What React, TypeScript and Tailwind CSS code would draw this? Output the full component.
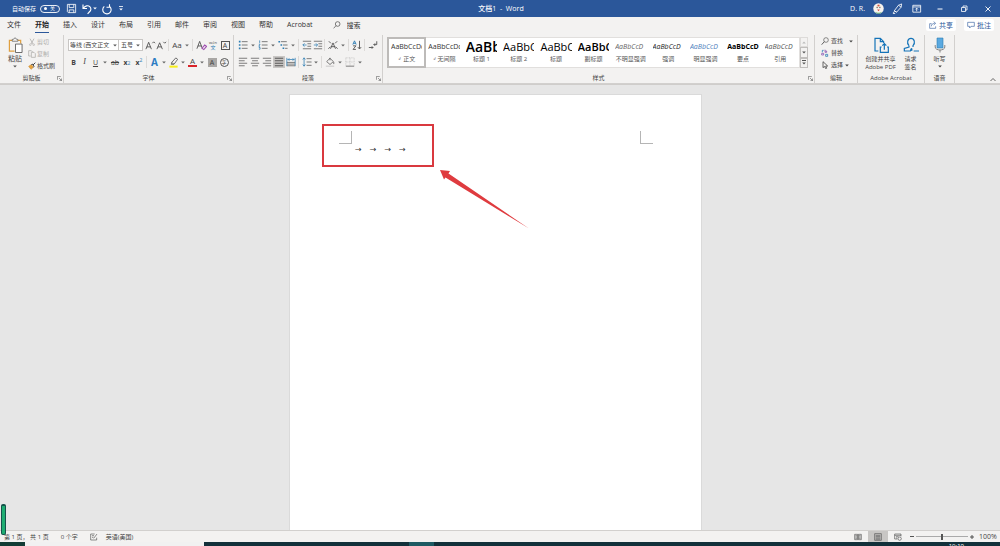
import type { ReactNode } from 'react';

const TABS = ['文件', '开始', '插入', '设计', '布局', '引用', '邮件', '审阅', '视图', '帮助', 'Acrobat'];

const STYLES = [
    { name: '正文', sample: 'AaBbCcDc', look: 'text-[7px] text-[#333]', mark: true, active: true },
    { name: '无间隔', sample: 'AaBbCcDc', look: 'text-[7px] text-[#333]', mark: true },
    { name: '标题 1', sample: 'AaBb', look: 'text-[14px] font-semibold text-black' },
    { name: '标题 2', sample: 'AaBbC', look: 'text-[11px] text-black' },
    { name: '标题', sample: 'AaBbC', look: 'text-[11px] text-black' },
    { name: '副标题', sample: 'AaBbC', look: 'text-[11px] font-semibold text-black' },
    { name: '不明显强调', sample: 'AaBbCcD', look: 'text-[7px] italic text-[#666]' },
    { name: '强调', sample: 'AaBbCcD', look: 'text-[7px] italic text-[#222]' },
    { name: '明显强调', sample: 'AaBbCcD', look: 'text-[7px] italic text-[#4f81bd]' },
    { name: '要点', sample: 'AaBbCcD', look: 'text-[7px] font-bold text-black' },
    { name: '引用', sample: 'AaBbCcD', look: 'text-[7px] italic text-[#555]' },
];

function Icon({ children, className = 'size-3' }: { children: ReactNode; className?: string }) {
    return (
        <svg viewBox="0 0 12 12" className={`shrink-0 ${className}`} fill="none" stroke="currentColor" strokeWidth="0.9" aria-hidden="true">
            {children}
        </svg>
    );
}

function Caret() {
    return (
        <svg viewBox="0 0 4 3" className="h-[3px] w-1 shrink-0" fill="currentColor" aria-hidden="true">
            <path d="M.2 .5h3.600L2 2.500z" />
        </svg>
    );
}

function Drop({ label }: { label: string }) {
    return (
        <button aria-label={label} className="flex h-4 w-2 items-center justify-center text-[#666]">
            <Caret />
        </button>
    );
}

function Tool({ label, children, className = 'w-3' }: { label: string; children: ReactNode; className?: string }) {
    return (
        <button aria-label={label} className={`flex h-4 shrink-0 items-center justify-center ${className}`}>
            {children}
        </button>
    );
}

function Sep() {
    return <span className="mx-px h-3 w-0.5 shrink-0 border-l border-[#dcdad8]" />;
}

function Group({ title, children, className = '', launcher = false }: { title: string; children: ReactNode; className?: string; launcher?: boolean }) {
    return (
        <section aria-label={title} className={`mt-0.5 flex flex-col border-r border-[#d2d0ce] ${className}`}>
            <div className="flex-1">{children}</div>
            <div className="flex h-2.5 items-center text-[6px]">
                <span className="w-1.5" />
                <span className="flex-1 text-center whitespace-nowrap">{title}</span>
                <span className="w-1.5">
                    {launcher && (
                        <Icon className="size-[5px] text-[#666]">
                            <path d="M1 9V1h8M5 5l6 6M11 6v5H6" strokeWidth="1.6" />
                        </Icon>
                    )}
                </span>
            </div>
        </section>
    );
}

function TitleBar() {
    return (
        <header className="flex h-[17px] items-center bg-[#2b579a] text-[6px] text-white">
            <div className="flex flex-1 items-center pl-3">
                <label className="flex items-center gap-1">
                    自动保存
                    <span className="relative flex h-2 w-5 items-center justify-end rounded-full border border-white/90 pr-1 text-[5px] leading-none">
                        <input type="checkbox" className="absolute left-[3px] size-[3px] appearance-none rounded-full bg-white" />
                        关
                    </span>
                </label>
                <button aria-label="保存" className="ml-1.5">
                    <Icon className="size-[11px]">
                        <path d="M1.500 1.500h9v9h-8l-1-1zM3.500 1.500v3.500h5V1.500M3.500 10.500V7.500h5v3" />
                    </Icon>
                </button>
                <button aria-label="撤消" className="ml-1 flex items-center">
                    <Icon>
                        <path d="M2 1.500v4h4M2.300 5.200C4 2.800 7 2 8.800 3.600c2 2 1 4-.5 5.400L6.600 10.800" strokeWidth="1.1" />
                    </Icon>
                    <Caret />
                </button>
                <button aria-label="恢复" className="ml-1">
                    <Icon>
                        <path d="M8.500 1.200v3h-3M8.300 3.200a4.200 4.200 0 1 1-5 .2" strokeWidth="1.1" />
                    </Icon>
                </button>
                <button aria-label="自定义快速访问工具栏" className="ml-1.5 flex flex-col items-center gap-px">
                    <span className="h-px w-1 bg-white/80" />
                    <Caret />
                </button>
            </div>
            <h1 className="text-[7px] font-medium">文档1 &nbsp;-&nbsp; Word</h1>
            <div className="flex flex-1 items-center justify-end pr-2.5">
                <span className="text-[7px]">D. R.</span>
                <svg viewBox="0 0 12 12" className="ml-2 size-[11px]" aria-hidden="true">
                    <circle cx="6" cy="6" r="5.700" fill="#f7f3ee" />
                    <path d="M3.500 4.500c0-4 5-4 5 0z" fill="#e9dccb" />
                    <circle cx="4.500" cy="5" r=".7" fill="#444" />
                    <circle cx="7.500" cy="5" r=".7" fill="#444" />
                    <path d="M5 2h2v1.500H5zM4.500 7h3l-1.500 2z" fill="#d9483b" />
                    <path d="M2 9.500c2 1.500 6 1.500 8 0-2 3-6 3-8 0z" fill="#4fa36c" />
                </svg>
                <button aria-label="即将推出的功能" className="ml-2">
                    <Icon className="size-[11px]">
                        <path d="M2.500 8.500 7 2.500 10.500 1 10 4.500 5 10zM7 2.500l3 2M2.500 8.500 5 10M1 10.500l2-1M3.500 11.500h-2.500" />
                    </Icon>
                </button>
                <button aria-label="功能区显示选项" className="ml-2">
                    <Icon className="size-[11px]">
                        <path d="M2 2.500h8.500v7.500H2zM2 4.300h8.500M6.200 9V5.800M4.800 7l1.400-1.400L7.600 7" />
                    </Icon>
                </button>
                <button aria-label="最小化" className="ml-3">
                    <Icon>
                        <path d="M3.500 6h5" strokeWidth="1" />
                    </Icon>
                </button>
                <button aria-label="向下还原" className="ml-3">
                    <Icon>
                        <path d="M3.500 4.500h4v4h-4zM5 4.500V3h4v4H7.500" strokeWidth="0.8" />
                    </Icon>
                </button>
                <button aria-label="关闭" className="ml-3">
                    <Icon className="-mr-1 size-3">
                        <path d="m3.500 3.500 5 5M8.500 3.500l-5 5" />
                    </Icon>
                </button>
            </div>
        </header>
    );
}

function TabBar() {
    return (
        <nav className="flex h-4 items-center text-[7px] text-[#333]">
            <div className="flex items-center gap-[14px] pl-[7px]">
                {TABS.map((tab) => (
                    <button
                        key={tab}
                        className={`h-[15px] border-b whitespace-nowrap ${tab === '开始' ? 'border-[#2b579a] font-bold text-[#222]' : 'border-transparent'}`}
                    >
                        {tab}
                    </button>
                ))}
            </div>
            <label className="ml-5 flex items-center gap-1.5">
                <Icon className="size-2">
                    <circle cx="7" cy="4.500" r="3.500" />
                    <path d="M4.500 7 1 11" />
                </Icon>
                <input aria-label="搜索" placeholder="搜索" className="w-16 bg-transparent outline-none placeholder:text-[#333]" />
            </label>
            <div className="ml-auto flex gap-2 pr-1.5 text-[#2b579a]">
                <button className="flex h-3 items-center gap-0.5 rounded-xs bg-white px-[3px]">
                    <Icon className="size-2">
                        <path d="M4 4H1v7h9V8M3.500 8c0-3 2-4.500 5-4.500M7 1l3 2.500L7 6" />
                    </Icon>
                    共享
                </button>
                <button className="flex h-3 items-center gap-0.5 rounded-xs bg-white px-[3px]">
                    <Icon className="size-2">
                        <path d="M1 2h10v6H6l-2 2.500V8H1z" />
                    </Icon>
                    批注
                </button>
            </div>
        </nav>
    );
}

function ClipboardGroup() {
    return (
        <Group title="剪贴板" className="w-16" launcher>
            <div className="flex pt-px pl-1.5">
                <button className="flex w-[18px] flex-col items-center pt-px text-[7px] leading-[8px]">
                    <svg viewBox="0 0 16 17" className="mb-0.5 h-4 w-[15px]" fill="none" aria-hidden="true">
                        <path d="M7 15H1.500V3.500h12V7" stroke="#e0a040" strokeWidth="1.300" />
                        <path d="M4.500 4.500v-2h1.300c.5-2 3-2 3.400 0h1.300v2z" fill="#f3f2f1" stroke="#666" strokeWidth=".8" />
                        <path d="M8 7.500h7v9H8z" fill="#fff" stroke="#555" strokeWidth=".9" />
                    </svg>
                    粘贴
                    <span className="mt-0.5 text-[#555]">
                        <Caret />
                    </span>
                </button>
                <div className="ml-1 flex flex-col text-[6px]">
                    <button disabled className="flex h-3 items-center gap-px text-[#b0aeac]">
                        <Icon className="size-2">
                            <path d="m3 1 4.500 8M9 1 4.500 9" strokeWidth="1.200" />
                            <circle cx="3.500" cy="10" r="1.300" />
                            <circle cx="8.500" cy="10" r="1.300" />
                        </Icon>
                        剪切
                    </button>
                    <button disabled className="flex h-3 items-center gap-px text-[#b0aeac]">
                        <Icon className="size-2">
                            <path d="M4 9H1V1h4l2 2M5 3.500h4l2 2V11H5z" strokeWidth="1.200" />
                        </Icon>
                        复制
                    </button>
                    <button className="flex h-3 items-center gap-px">
                        <Icon className="size-2">
                            <path d="M1 6.500 5 4l3 4-3.500 3z" fill="#e8a33d" stroke="#c98a2b" />
                            <path d="m5 4 1.500-1L9 6.500 8 8M7.500 4.500 11 1" strokeWidth="1.500" stroke="#444" />
                        </Icon>
                        格式刷
                    </button>
                </div>
            </div>
        </Group>
    );
}

function FontGroup() {
    return (
        <Group title="字体" className="w-[170px]" launcher>
            <div className="flex flex-col gap-px pt-0.5 pl-1 text-[8px]">
                <div className="flex h-4 items-center">
                    <div className="relative flex h-3 w-[51px] items-center border border-[#c8c6c4] bg-white">
                        <select aria-label="字体" className="w-full appearance-none overflow-hidden pl-px text-[6px] whitespace-nowrap outline-none">
                            <option>等线 (西文正文</option>
                        </select>
                        <span className="pointer-events-none absolute right-px text-[#555]">
                            <Caret />
                        </span>
                    </div>
                    <div className="relative mr-0.5 flex h-3 w-6 items-center border border-l-0 border-[#c8c6c4] bg-white">
                        <select aria-label="字号" className="w-full appearance-none pl-0.5 text-[6px] outline-none">
                            <option>五号</option>
                        </select>
                        <span className="pointer-events-none absolute right-0.5 text-[#555]">
                            <Caret />
                        </span>
                    </div>
                    <Tool label="增大字号" className="w-[11px]">
                        <Icon className="size-[11px]">
                            <path d="m1 10 3-7.500L7 10M2 7.500h4M8 3.500 9.500 2 11 3.500" />
                        </Icon>
                    </Tool>
                    <Tool label="减小字号" className="w-[11px]">
                        <Icon className="size-[11px]">
                            <path d="m1 10 3-7L7 10M2 7.500h4M8 2l1.500 1.500L11 2" />
                        </Icon>
                    </Tool>
                    <Sep />
                    <Tool label="更改大小写">Aa</Tool>
                    <Drop label="更改大小写选项" />
                    <Sep />
                    <Tool label="清除格式">
                        <Icon className="size-[11px]">
                            <path d="m1 9.500 3-8 3 8M2 6.500h4" />
                            <path d="m6.500 9 3-3.500L11.500 7l-3 3.500z" stroke="#a04fb0" strokeWidth="1.200" />
                        </Icon>
                    </Tool>
                    <Tool label="拼音指南">
                        <span className="flex flex-col items-center text-[4px] leading-[4px]">
                            wén<span className="text-[5px] leading-[5px] text-[#2b7cb3]">文</span>
                        </span>
                    </Tool>
                    <Tool label="字符边框">
                        <span className="flex size-[9px] items-center justify-center border border-[#555] text-[7px]">A</span>
                    </Tool>
                </div>
                <div className="flex h-4 items-center text-[7px]">
                    <Tool label="加粗" className="w-[11px]">
                        <b>B</b>
                    </Tool>
                    <Tool label="倾斜" className="w-[11px]">
                        <i className="font-[family-name:'Liberation_Serif'] text-[8px]">I</i>
                    </Tool>
                    <Tool label="下划线" className="w-[11px]">
                        <u>U</u>
                    </Tool>
                    <Drop label="下划线样式" />
                    <Tool label="删除线">
                        <s>ab</s>
                    </Tool>
                    <Tool label="下标">
                        <b>x</b>
                        <sub className="text-[5px] text-[#2b7cb3]">2</sub>
                    </Tool>
                    <Tool label="上标">
                        <b>x</b>
                        <sup className="text-[5px] text-[#2b7cb3]">2</sup>
                    </Tool>
                    <Sep />
                    <Tool label="文本效果" className="w-[11px]">
                        <b className="text-[10px] text-[#2b7cc3]">A</b>
                    </Tool>
                    <Drop label="文本效果选项" />
                    <Tool label="突出显示" className="w-[11px]">
                        <Icon className="size-[11px]">
                            <path d="m4 6 4.500-5L10.500 2.500 6.500 8zM4 6l-.5 2h2l1-.5" stroke="#555" />
                            <path d="M1.500 10.500h9" stroke="#f7ee1a" strokeWidth="2.200" />
                        </Icon>
                    </Tool>
                    <Drop label="突出显示颜色" />
                    <Tool label="字体颜色" className="w-[11px]">
                        <span className="w-[9px] border-b-2 border-[#d8232a] text-center text-[8px] leading-[8px]">A</span>
                    </Tool>
                    <Drop label="字体颜色选项" />
                    <Tool label="字符底纹">
                        <span className="flex size-[9px] items-center justify-center bg-[#a9a7a5]">A</span>
                    </Tool>
                    <Tool label="带圈字符">
                        <span className="flex size-[9px] items-center justify-center rounded-full border border-[#555] text-[5px]">字</span>
                    </Tool>
                </div>
            </div>
        </Group>
    );
}

function ParagraphGroup() {
    return (
        <Group title="段落" className="w-[149px]" launcher>
            <div className="flex flex-col gap-px pt-0.5 pl-[3px] text-[#555]">
                <div className="flex h-4 items-center">
                    <Tool label="项目符号">
                        <Icon className="size-2.5">
                            <path d="M4.500 2h7M4.500 6h7M4.500 10h7" />
                            <path d="M1 2h2M1 6h2M1 10h2" stroke="#2b7cb3" strokeWidth="2" />
                        </Icon>
                    </Tool>
                    <Drop label="项目符号库" />
                    <Tool label="编号">
                        <Icon className="size-2.5">
                            <path d="M4.500 2h7M4.500 6h7M4.500 10h7" />
                            <path d="M2 .5v3M1 5h1.500L1 7.500h1.500M1 9h1.500v2H1" stroke="#2b7cb3" />
                        </Icon>
                    </Tool>
                    <Drop label="编号库" />
                    <Tool label="多级列表">
                        <Icon className="size-2.5">
                            <path d="M3.500 2h7M6 6h5.500M8.500 10h3" />
                            <path d="M.5 2h2M3 6h2M5.500 10h2" stroke="#2b7cb3" strokeWidth="1.800" />
                        </Icon>
                    </Tool>
                    <Drop label="列表库" />
                    <Sep />
                    <Tool label="减少缩进量" className="w-[11px]">
                        <Icon className="size-2.5">
                            <path d="M1 1.500h10M6.500 4.500H11M6.500 7.500H11M1 10.500h10" />
                            <path d="M5.500 6H1M3 4 1 6l2 2" stroke="#2b7cb3" />
                        </Icon>
                    </Tool>
                    <Tool label="增加缩进量" className="w-[11px]">
                        <Icon className="size-2.5">
                            <path d="M1 1.500h10M6.500 4.500H11M6.500 7.500H11M1 10.500h10" />
                            <path d="M1 6h4.500M3.500 4l2 2-2 2" stroke="#2b7cb3" />
                        </Icon>
                    </Tool>
                    <Sep />
                    <Tool label="中文版式">
                        <Icon className="size-2.5">
                            <path d="m3 10.500 3-7 3 7M4 8h4M1 1.500l2.500 2.500M11 1.500 8.500 4M.5 10.500 3 8M11.500 10.500 9 8" strokeWidth="1.100" />
                        </Icon>
                    </Tool>
                    <Drop label="中文版式选项" />
                    <Sep />
                    <Tool label="排序">
                        <Icon className="size-2.5">
                            <path d="m1 5.500 2-4.500 2 4.500M1.700 4h2.600" stroke="#2b7cb3" strokeWidth="1.100" />
                            <path d="M1.300 7h3.400l-3.400 4.300h3.400M9 1v9.500M7 8.500l2 2.300 2-2.300" strokeWidth="1.100" />
                        </Icon>
                    </Tool>
                    <Sep />
                    <Tool label="显示编辑标记">
                        <Icon className="size-2.5">
                            <path d="M10.500 1.500v4H7M8.500 4 7 5.500 8.500 7M1 9h5M4.500 7.500 6 9l-1.500 1.500" strokeWidth="1.100" />
                        </Icon>
                    </Tool>
                </div>
                <div className="flex h-4 items-center">
                    <Tool label="左对齐">
                        <Icon className="size-2.5">
                            <path d="M1 1.500h10M1 4.500h7M1 7.500h10M1 10.500h7" />
                        </Icon>
                    </Tool>
                    <Tool label="居中">
                        <Icon className="size-2.5">
                            <path d="M1 1.500h10M2.500 4.500h7M1 7.500h10M2.500 10.500h7" />
                        </Icon>
                    </Tool>
                    <Tool label="右对齐">
                        <Icon className="size-2.5">
                            <path d="M1 1.500h10M4 4.500h7M1 7.500h10M4 10.500h7" />
                        </Icon>
                    </Tool>
                    <button aria-label="两端对齐" className="flex h-3 w-3 items-center justify-center bg-[#c8c6c4]">
                        <Icon className="size-2.5">
                            <path d="M1 1.500h10M1 4.500h10M1 7.500h10M1 10.500h10" stroke="#333" />
                        </Icon>
                    </button>
                    <Tool label="分散对齐">
                        <Icon className="size-2.5">
                            <path d="M1 6.500h10M1 8.500h10M1 10.500h10" />
                            <path d="M1 1v10M11 1v10M2 3h8M4 1.500 2.500 3 4 4.500M8 1.500 9.500 3 8 4.500" stroke="#2b7cb3" />
                        </Icon>
                    </Tool>
                    <Sep />
                    <Tool label="行距" className="w-[11px]">
                        <Icon className="size-2.5">
                            <path d="M5.500 2h6M5.500 6h6M5.500 10h6" />
                            <path d="M2.500 1v10M1 3l1.500-2L4 3M1 9l1.500 2L4 9" stroke="#2b7cb3" />
                        </Icon>
                    </Tool>
                    <Drop label="行距选项" />
                    <Sep />
                    <Tool label="底纹">
                        <Icon className="size-2.5">
                            <path d="m2 5.500 4-4 4 4-4 3.500zM6 1v3M10.500 6v2.500" />
                            <path d="M1 11h10" stroke="#bbb" />
                        </Icon>
                    </Tool>
                    <Drop label="底纹颜色" />
                    <Tool label="边框">
                        <Icon className="size-2.5">
                            <path d="M1 1h10v10M1 1v10M6 1v10M1 6h10" stroke="#bbb" strokeDasharray="1 1" />
                            <path d="M1 11h10" />
                        </Icon>
                    </Tool>
                    <Drop label="边框选项" />
                </div>
            </div>
        </Group>
    );
}

function StylesGroup() {
    return (
        <Group title="样式" className="min-w-0 flex-1" launcher>
            <div className="flex pt-0.5 pr-1.5 pl-1">
                <div className="flex h-[31px] min-w-0 flex-1 border border-[#e1dfdd] bg-white">
                    {STYLES.map((s) => (
                        <button
                            key={s.name}
                            className={`flex min-w-0 flex-1 flex-col items-center ${s.active ? 'outline-2 -outline-offset-1 outline-[#bdbbb9]' : ''}`}
                        >
                            <span className={`mx-[3px] flex h-[17px] items-center self-stretch overflow-hidden leading-none whitespace-nowrap ${s.look}`}>{s.sample}</span>
                            <span className="flex h-2 items-center text-[6px] whitespace-nowrap text-[#555]">
                                {s.mark && <span className="mr-0.5 text-[4px]">↲</span>}
                                {s.name}
                            </span>
                        </button>
                    ))}
                </div>
                <div className="flex w-2 flex-col text-[#555]">
                    <button disabled aria-label="上一行" className="flex flex-1 items-center justify-center border border-[#dddbd9] text-[#bbb]">
                        <span className="rotate-180">
                            <Caret />
                        </span>
                    </button>
                    <button aria-label="下一行" className="flex flex-1 items-center justify-center border border-[#c0bebc]">
                        <Caret />
                    </button>
                    <button aria-label="其他样式" className="flex flex-1 flex-col items-center justify-center gap-px border border-[#c0bebc]">
                        <span className="h-px w-1 bg-[#555]" />
                        <Caret />
                    </button>
                </div>
            </div>
        </Group>
    );
}

function Ribbon() {
    return (
        <div className="flex h-[51px] border-b border-[#d2d0ce] text-[#444]">
            <ClipboardGroup />
            <FontGroup />
            <ParagraphGroup />
            <StylesGroup />
            <Group title="编辑" className="w-[43px]">
                <div className="flex flex-col pl-1.5 text-[6px]">
                    <button className="flex h-3 items-center gap-0.5">
                        <Icon className="size-2">
                            <circle cx="7.500" cy="4.500" r="3.500" />
                            <path d="M5 7 1 11.500" strokeWidth="1.300" />
                        </Icon>
                        查找
                        <span className="ml-1">
                            <Caret />
                        </span>
                    </button>
                    <button className="flex h-3 items-center gap-0.5">
                        <Icon className="size-2">
                            <path d="M6 1v4h2.500V3H6M1 6.500h3V9H1z" stroke="#8a5bb5" strokeWidth="1.200" />
                            <path d="M4 2H2v3M7 8h3v3H7z" stroke="#2b7cb3" strokeWidth="1.200" />
                        </Icon>
                        替换
                    </button>
                    <button className="flex h-3 items-center gap-0.5">
                        <Icon className="size-2">
                            <path d="M3 1v9l2.300-2L7 11.500l1.500-.7L7 7.500h3z" strokeWidth="1.200" />
                        </Icon>
                        选择
                        <Caret />
                    </button>
                </div>
            </Group>
            <Group title="Adobe Acrobat" className="w-[67px]">
                <div className="flex justify-center gap-[3px] pt-0.5 text-[6px] leading-[8px]">
                    <button className="flex w-9 flex-col items-center whitespace-nowrap">
                        <Icon className="mb-0.5 size-4 text-[#1473b8]">
                            <path d="M4 10.500H1.500V1h4L8 3.500v1M5.500 1v2.500H8M6.500 7.500H5.500v4h6v-4h-1M8.500 9.500V5M7 6.500 8.500 5 10 6.500" />
                        </Icon>
                        <span>创建并共享</span>
                        <span>Adobe PDF</span>
                    </button>
                    <button className="flex w-[18px] flex-col items-center whitespace-nowrap">
                        <Icon className="mb-0.5 size-4 text-[#1473b8]">
                            <path d="M4.500 6.500C2.500 4.500 3.500 1 6 1s3.500 3.500 1.500 5.500v1M4.500 6.500 4.500 7.500 1 8.500v2h4.500C6 8 7 8 6.500 10.500M8 10.500h4" />
                        </Icon>
                        <span>请求</span>
                        <span>签名</span>
                    </button>
                </div>
            </Group>
            <Group title="语音" className="w-[30px]">
                <button className="flex w-full flex-col items-center pt-0.5 text-[6px] leading-[8px]">
                    <svg viewBox="0 0 12 16" className="mb-0.5 h-4 w-3" fill="none" aria-hidden="true">
                        <path d="M3 1h6v10H3z" fill="#5aa9e0" stroke="#2b7cb3" strokeWidth=".6" />
                        <path d="M1.200 8v2c0 4 9.600 4 9.600 0V8M6 13v2.500" stroke="#777" strokeWidth=".9" />
                    </svg>
                    听写
                    <span className="mt-0.5">
                        <Caret />
                    </span>
                </button>
            </Group>
            <div className="flex w-[45px] items-end justify-end pr-1">
                <button aria-label="折叠功能区">
                    <Icon className="size-1.5">
                        <path d="m1 8 5-5 5 5" strokeWidth="1.600" />
                    </Icon>
                </button>
            </div>
        </div>
    );
}

function Document() {
    return (
        <main className="flex flex-1 justify-center border-t border-[#cfcdcb] bg-[#e6e6e6] pt-[9px] pr-[9px]">
            <article className="relative w-[413px] border border-b-0 border-[#dadada] bg-white">
                {/* margin corners */}
                <span className="absolute top-9 left-[49px] size-[13px] border-r border-b border-[#b5b5b5]" />
                <span className="absolute top-9 right-[48px] size-[13px] border-b border-l border-[#b5b5b5]" />
                {/* tab marks */}
                <p className="flex gap-2 pt-[50px] pl-[65px] font-[family-name:'DejaVu_Sans'] text-[8px] leading-[10px] text-[#333]">
                    {[0, 1, 2, 3].map((n) => (
                        <span key={n}>→</span>
                    ))}
                </p>
                <span className="absolute top-[29px] left-8 h-[43px] w-[112px] border-2 border-[#d9393f]" />
                <svg viewBox="0 0 92 60" className="absolute top-[75px] left-[149px] h-[60px] w-[92px]" aria-hidden="true">
                    <path d="M1 0 11 1 9.500 3.500 90 58.500 6.500 7.500 5 9.500z" fill="#df3b3f" />
                </svg>
            </article>
        </main>
    );
}

function StatusBar() {
    return (
        <footer className="flex h-3 items-center border-t border-[#d2d0ce] bg-[#f3f2f1] text-[6px] text-[#444]">
            <span className="ml-1">第 1 页， 共 1 页</span>
            <span className="ml-3">0 个字</span>
            <button aria-label="校对" className="ml-3">
                <Icon className="size-2">
                    <path d="M10 7v3.500H1v-9h6M3 4h3M3 6.500h2M5.500 8l5-6.500" />
                </Icon>
            </button>
            <button className="ml-2">英语(美国)</button>
            <div className="ml-auto flex h-full items-center">
                <button aria-label="阅读视图" className="flex w-5 justify-center">
                    <Icon className="size-2">
                        <path d="M1 2h4.500v8H1zM6.500 2H11v8H6.500zM2 4h3M2 6h3M2 8h3M7 4h3M7 6h3M7 8h3" />
                    </Icon>
                </button>
                <button aria-label="页面视图" className="flex h-full w-5 items-center justify-center bg-[#c8c6c4]">
                    <Icon className="size-2">
                        <path d="M1 1h10v10H1zM2.500 3.500h7M2.500 5.500h7M2.500 7.500h7M2.500 9.300h7" />
                    </Icon>
                </button>
                <button aria-label="Web 版式视图" className="flex w-5 justify-center">
                    <Icon className="size-2">
                        <path d="M10.500 5V1.500H1V9h4M1 3.500h9.500M3 5.500h4M3 7.500h2" />
                        <circle cx="8.500" cy="8.500" r="2.500" />
                    </Icon>
                </button>
                <button aria-label="缩小" className="flex w-2 justify-center">
                    <span className="h-px w-1 bg-[#555]" />
                </button>
                <input
                    type="range"
                    aria-label="显示比例"
                    defaultValue="50"
                    className="h-2 w-[52px] appearance-none bg-[linear-gradient(#aaa,#aaa)] bg-[length:100%_1px] bg-center bg-no-repeat [&::-webkit-slider-thumb]:h-1.5 [&::-webkit-slider-thumb]:w-0.5 [&::-webkit-slider-thumb]:appearance-none [&::-webkit-slider-thumb]:bg-[#555]"
                />
                <button aria-label="放大" className="flex w-2 justify-center">
                    <Icon className="size-1.5">
                        <path d="M6 2v8M2 6h8" strokeWidth="1.800" />
                    </Icon>
                </button>
                <button className="w-6 text-center text-[7px]">100%</button>
            </div>
        </footer>
    );
}

export default function App() {
    return (
        <div className="relative flex min-h-screen flex-col bg-[#f3f2f1] font-[family-name:'Open_Sans','Noto_Sans_CJK_SC',sans-serif] leading-none select-none">
            <TitleBar />
            <TabBar />
            <Ribbon />
            <Document />
            <StatusBar />
            {/* system taskbar edge */}
            <div className="flex h-1 overflow-hidden bg-[#12303a]">
                <span className="w-[25px] bg-[#123c35]" />
                <span className="w-[179px] bg-[#f1f1f1]" />
                <span className="ml-[205px] w-[25px] bg-[#1d5a63]" />
                <span className="mr-9 ml-auto text-[6px] leading-[8px] text-white">10:19</span>
            </div>
            <span className="absolute bottom-[11px] left-px h-[31px] w-[5px] rounded-xs border border-t-2 border-[#14524a] bg-[#1fae72]" />
        </div>
    );
}
